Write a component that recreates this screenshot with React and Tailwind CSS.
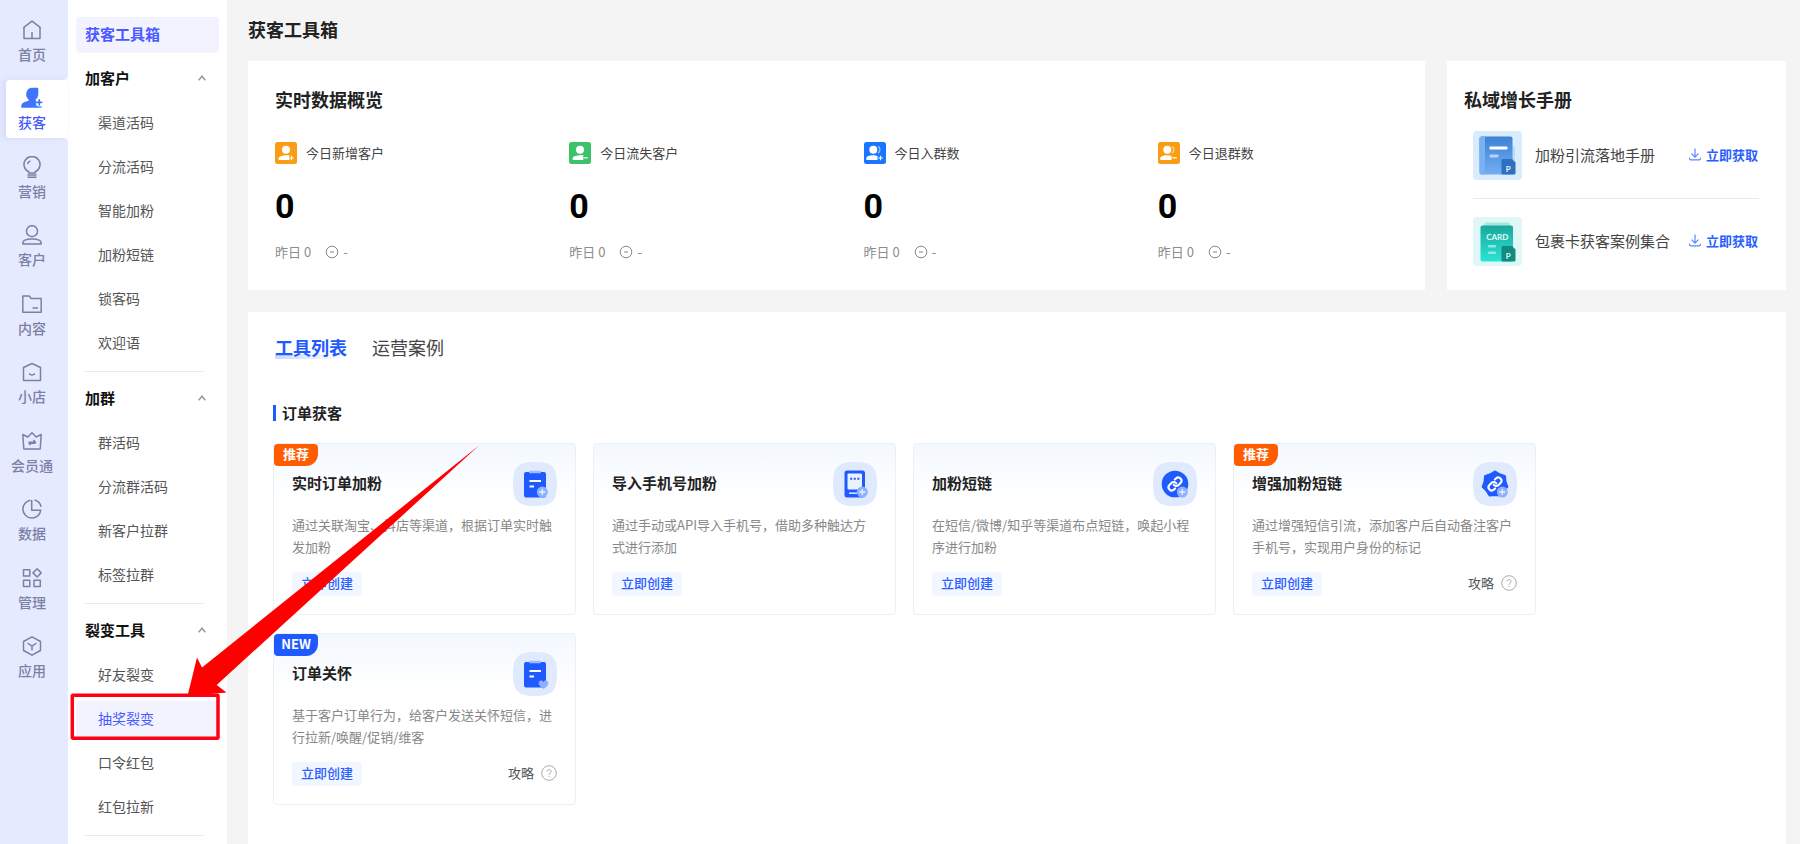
import { useState } from 'react';

const railItems = [
  { label: '首页', icon: HomeIcon },
  { label: '获客', icon: AcquireIcon },
  { label: '营销', icon: BulbIcon },
  { label: '客户', icon: UserIcon },
  { label: '内容', icon: FolderIcon },
  { label: '小店', icon: ShopIcon },
  { label: '会员通', icon: CrownIcon },
  { label: '数据', icon: ChartIcon },
  { label: '管理', icon: GridIcon },
  { label: '应用', icon: AppIcon },
];

const menuGroups = [
  { title: '加客户', items: ['渠道活码', '分流活码', '智能加粉', '加粉短链', '锁客码', '欢迎语'] },
  { title: '加群', items: ['群活码', '分流群活码', '新客户拉群', '标签拉群'] },
  { title: '裂变工具', items: ['好友裂变', '抽奖裂变', '口令红包', '红包拉新'] },
];

const stats = [
  { label: '今日新增客户', value: 0, yesterday: 0, color: '#fa9d14', plus: true },
  { label: '今日流失客户', value: 0, yesterday: 0, color: '#3dc26c', plus: false },
  { label: '今日入群数', value: 0, yesterday: 0, color: '#1b76ff', plus: true, group: true },
  { label: '今日退群数', value: 0, yesterday: 0, color: '#fa9d14', plus: false, group: true },
];

const manuals = [
  { name: '加粉引流落地手册', icon: BookCover },
  { name: '包裹卡获客案例集合', icon: CardCover },
];

const tools = [
  { title: '实时订单加粉', desc: '通过关联淘宝、抖店等渠道，根据订单实时触发加粉', badge: '推荐', icon: OrderIcon },
  { title: '导入手机号加粉', desc: '通过手动或API导入手机号，借助多种触达方式进行添加', icon: PhoneIcon },
  { title: '加粉短链', desc: '在短信/微博/知乎等渠道布点短链，唤起小程序进行加粉', icon: LinkIcon },
  { title: '增强加粉短链', desc: '通过增强短信引流，添加客户后自动备注客户手机号，实现用户身份的标记', badge: '推荐', guide: true, icon: StarLinkIcon },
  { title: '订单关怀', desc: '基于客户订单行为，给客户发送关怀短信，进行拉新/唤醒/促销/维客', badge: 'NEW', guide: true, icon: CareIcon },
];

const badgeColors = {
  '推荐': 'bg-[#ff5c00]',
  'NEW': 'bg-[#1f5aff]',
};

function RailSvg({ children }) {
  return (
    <svg width="20" height="20" viewBox="0 0 20 20" fill="none" stroke="currentColor" strokeWidth="1.5" strokeLinejoin="round" aria-hidden="true">
      {children}
    </svg>
  );
}

function HomeIcon() {
  return (
    <RailSvg>
      <path d="M1.2 7.8 10 1.2l8.8 6.6M2 7.2v11.3h16V7.2M10 12v6.5" />
    </RailSvg>
  );
}

function AcquireIcon() {
  return (
    <svg width="22" height="22" viewBox="0 0 22 22" aria-hidden="true">
      <path d="M10.500.8h5.800c.6 0 1 .4 1 1v5.600a6.400 6.400 0 0 1-3 5.300l1 1.200-.2 3.800 2.800 3.100H1.200c-.7 0-1-.4-1-1 0-3.600 2.600-5 7.200-5.800l.2-1.600A6.600 6.600 0 0 1 10.500.8Z" fill="#3f74ff" />
      <path d="M18.200 12.200v6.200M15.100 15.300h6.200" stroke="#fff" strokeWidth="4" />
      <path d="M18.200 12.200v6.200M15.100 15.300h6.200" stroke="#3f74ff" strokeWidth="1.700" />
      <path d="M13 20h7.500" stroke="#3f9cff" strokeWidth="1.600" />
    </svg>
  );
}

function BulbIcon() {
  return (
    <svg width="20" height="22" viewBox="0 0 20 22" fill="none" stroke="currentColor" strokeWidth="1.500" aria-hidden="true">
      <path d="M6.800 16.900v-1.100a8 8 0 1 1 6.400 0v1.100ZM5.500 19h9M5.500 21.200h9M5.600 8c.3-1.600 1.300-2.700 2.900-3.100" />
    </svg>
  );
}

function UserIcon() {
  return (
    <RailSvg>
      <circle cx="10" cy="6.200" r="5.500" />
      <path d="M.8 18.900c-.4-3.600 2.800-5 9.200-5s9.600 1.400 9.200 5Z" />
    </RailSvg>
  );
}

function FolderIcon() {
  return (
    <RailSvg>
      <path d="M.8 2h6.400l2 2.500h10v13.700H.8ZM10.500 14h5.500" />
    </RailSvg>
  );
}

function ShopIcon() {
  return (
    <RailSvg>
      <path d="M1.500 5.500 10 1.500l8.500 4v13h-17ZM7 11.500c1.500 2 4.500 2 6 0" />
    </RailSvg>
  );
}

function CrownIcon() {
  return (
    <RailSvg>
      <path d="M.8 3.500 5.800 6 10 1.800 14.200 6l5-2.500-1 14.500H1.800ZM6.500 11.300h7l-2-2.300M13.500 12.200h-7M6.800 12.200l1.800 1.800" />
    </RailSvg>
  );
}

function ChartIcon() {
  return (
    <RailSvg>
      <path d="M8.500 1.200A9 9 0 1 0 18.800 11.200H9.700V1M12.500 1c3.400.8 5.800 3.300 6.600 6.800" />
    </RailSvg>
  );
}

function GridIcon() {
  return (
    <RailSvg>
      <path d="M1.500 1.800h6.300v6.300H1.500ZM1.500 12.200h6.300v6.300H1.500ZM12 12.200h6.300v6.300H12ZM15.100.8l4.100 4.100-4.100 4.100L11 4.900Z" />
    </RailSvg>
  );
}

function AppIcon() {
  return (
    <RailSvg>
      <path d="M10 .8 18.500 5.500v9L10 19.200 1.500 14.500v-9ZM5.500 7l4.500 3.200L14.500 7M10 10.200v4.300" />
    </RailSvg>
  );
}

function StatIcon({ color, plus, group }) {
  return (
    <svg width="22" height="22" viewBox="0 0 22 22" aria-hidden="true">
      <rect width="22" height="22" rx="2.500" fill={color} />
      <circle cx={group ? 9.300 : 11} cy="7.700" r="4" fill="#fff" />
      {group && <path d="M14 4.300c2.600 1.400 2.600 5.400 0 6.800" stroke="#fff" strokeOpacity=".6" strokeWidth="1.200" fill="none" />}
      <path d={group ? 'M2.300 18v-1.700c0-1.900 3-3.100 6.600-3.100 2 0 3.600.3 4.600 1V18Z' : 'M3.700 18v-1.700c0-1.900 2.700-2.700 6.300-3.100h4.500V18Z'} fill="#fff" />
      <path d={plus ? 'M14.200 16h4.600M16.500 13.800v4.500' : 'M14 15.800h4.800'} stroke={color} strokeWidth="3" />
      <path d={plus ? 'M14.200 16h4.600M16.500 13.800v4.500' : 'M14.200 15.800h4.600'} stroke="#fff" strokeWidth="1.200" />
    </svg>
  );
}

function BookCover() {
  return (
    <svg width="49" height="49" viewBox="0 0 49 49" className="shrink-0" aria-hidden="true">
      <defs>
        <linearGradient id="book" x1="0" y1="0" x2="0" y2="1">
          <stop stopColor="#3b82d6" />
          <stop offset="1" stopColor="#73adf4" />
        </linearGradient>
      </defs>
      <rect width="49" height="49" rx="4" fill="#daebfb" />
      <rect x="34" y="15" width="8" height="28" rx="1.500" fill="#bcdcfb" />
      <rect x="6.500" y="5.500" width="33" height="38" rx="2" fill="url(#book)" />
      <path d="M8.500 5.500H12v38H8.500a2 2 0 0 1-2-2v-34a2 2 0 0 1 2-2Z" fill="#79b1f4" />
      <rect x="16.500" y="15.500" width="18" height="3" rx="1" fill="#fff" />
      <rect x="16.500" y="23.500" width="9" height="3" rx="1" fill="#b4d4f8" />
      <path d="M30 28h9l3.500 3.500V42a1.500 1.500 0 0 1-1.500 1.500H30A1.500 1.500 0 0 1 28.500 42V29.500A1.500 1.500 0 0 1 30 28Z" fill="#2c70bf" />
      <text x="35.300" y="40.500" fontSize="8" fontWeight="700" textAnchor="middle" fill="#e4f1ff" fontFamily="Lato, sans-serif">P</text>
    </svg>
  );
}

function CardCover() {
  return (
    <svg width="49" height="49" viewBox="0 0 49 49" className="shrink-0" aria-hidden="true">
      <defs>
        <linearGradient id="card" x1="0" y1="0" x2="0" y2="1">
          <stop stopColor="#1ba79c" />
          <stop offset="1" stopColor="#28e5d4" />
        </linearGradient>
      </defs>
      <rect width="49" height="49" rx="4" fill="#dff8f7" />
      <path d="M13 5.500h22a2 2 0 0 1 2 2V12H11V7.500a2 2 0 0 1 2-2Z" fill="#a6e6e0" />
      <rect x="7.500" y="8.500" width="32.500" height="36" rx="2" fill="url(#card)" />
      <text x="24.300" y="23" fontSize="8" fontWeight="700" textAnchor="middle" fill="#e0fffc" fontFamily="Lato, sans-serif">CARD</text>
      <rect x="15" y="28" width="8" height="2.500" rx="1" fill="#8eeae2" />
      <rect x="15" y="34.500" width="8" height="2.500" rx="1" fill="#8eeae2" />
      <path d="M30 29h9l3.500 3.500V43a1.500 1.500 0 0 1-1.500 1.500H30a1.500 1.500 0 0 1-1.500-1.500V30.500A1.500 1.500 0 0 1 30 29Z" fill="#138a80" />
      <text x="35.300" y="41.500" fontSize="8" fontWeight="700" textAnchor="middle" fill="#d5fffa" fontFamily="Lato, sans-serif">P</text>
    </svg>
  );
}

function ToolTile({ children, mark = 'plus' }) {
  return (
    <svg width="44" height="44" viewBox="0 0 44 44" className="shrink-0" aria-hidden="true">
      <path d="M22 0c17 0 22 5 22 22s-5 22-22 22S0 39 0 22 5 0 22 0Z" fill="#dfeaff" />
      {children}
      {mark === 'plus' && (
        <>
          <circle cx="29.300" cy="30" r="5.500" fill="#8db0ff" />
          <path d="M26.300 30h6M29.300 27v6" stroke="#e9f0ff" strokeWidth="1.300" />
        </>
      )}
      {mark === 'heart' && (
        <path d="M30.500 37c-3-2-4.900-3.800-4.900-5.900 0-2.700 3.300-3.600 4.900-1.200 1.600-2.400 4.900-1.500 4.900 1.200 0 2.100-1.900 3.900-4.900 5.900Z" fill="#8db0ff" />
      )}
    </svg>
  );
}

function Sheet() {
  return (
    <>
      <rect x="11" y="10" width="22" height="25.500" rx="2" fill="#1f5aff" />
      <rect x="16" y="8.800" width="12" height="2.500" rx="1" fill="#9dbbff" />
      <path d="M16.500 19H28M16.500 24.500h4.500" stroke="#fff" strokeWidth="2" />
    </>
  );
}

function OrderIcon() {
  return <ToolTile><Sheet /></ToolTile>;
}

function CareIcon() {
  return <ToolTile mark="heart"><Sheet /></ToolTile>;
}

function PhoneIcon() {
  return (
    <ToolTile>
      <rect x="11.500" y="8.500" width="20.500" height="27" rx="2.500" fill="#1f5aff" />
      <rect x="14.500" y="11.500" width="14.500" height="16" rx="1" fill="#eaf1ff" />
      <path d="M17.200 16.800h2M20.800 16.800h2M24.400 16.800h2" stroke="#1f5aff" strokeWidth="2" />
      <path d="M16 31.200h8" stroke="#dfeaff" strokeWidth="1.500" />
    </ToolTile>
  );
}

function Chain() {
  return (
    <g transform="translate(14.200 14.200) scale(.65)" stroke="#fff" strokeWidth="3.200" fill="none" strokeLinecap="round">
      <path d="M10 13a5 5 0 0 0 7.540.540l3-3a5 5 0 0 0-7.070-7.070l-1.720 1.710" />
      <path d="M14 11a5 5 0 0 0-7.540-.540l-3 3a5 5 0 0 0 7.070 7.070l1.710-1.710" />
    </g>
  );
}

function LinkIcon() {
  return (
    <ToolTile>
      <circle cx="22" cy="22" r="13.300" fill="#1f5aff" />
      <Chain />
    </ToolTile>
  );
}

function StarLinkIcon() {
  return (
    <ToolTile>
      <path d="m22 9 4.800 2.900 5.500 1.900.6 5.800 1.900 5.300-4.100 4.100-3 4.900-5.700-.6-5.700.6-3-4.900-4.100-4.100 1.900-5.300.6-5.800 5.500-1.900Z" fill="#1f5aff" stroke="#1f5aff" strokeWidth="1.200" strokeLinejoin="round" />
      <Chain />
    </ToolTile>
  );
}

function ChevronUp() {
  return (
    <svg width="8" height="6" viewBox="0 0 8 6" fill="none" stroke="#999" strokeWidth="1.500" aria-hidden="true">
      <path d="m.7 5.200 3.300-4 3.300 4" />
    </svg>
  );
}

function NavRail() {
  return (
    <nav className="w-[68px] shrink-0 bg-[#e6eaff] pt-3">
      <ul className="flex h-[674px] flex-col justify-between">
        {railItems.map(({ label, icon: Icon }) => {
          const active = label === '获客';
          return (
            <li key={label} className="relative pl-1.5">
              <a
                href="#"
                className={`flex h-[58px] flex-col items-center justify-between pt-[7px] pr-2.5 pb-1.5 text-sm leading-5 ${active ? 'rounded-l bg-white text-[#4559ff] shadow-[-3px_0_6px_rgba(80,90,200,0.12)]' : 'text-[#7d7fa6]'}`}
              >
                <span className="flex h-[22px] items-center"><Icon /></span>
                <span className="font-medium">{label}</span>
              </a>
              {active && (
                <>
                  <span className="absolute right-0 -top-1 size-1 bg-white"><span className="block size-1 rounded-br bg-[#e6eaff]" /></span>
                  <span className="absolute right-0 -bottom-1 size-1 bg-white"><span className="block size-1 rounded-tr bg-[#e6eaff]" /></span>
                </>
              )}
            </li>
          );
        })}
      </ul>
    </nav>
  );
}

function SideMenu() {
  return (
    <aside className="w-[159px] shrink-0 bg-white pt-[13px]">
      <div className="flex h-11 items-center px-2">
        <a href="#" className="flex h-9 flex-1 items-center rounded-sm bg-[#f2f3ff] pb-0.5 pl-[9px] text-[15px] font-bold text-[#4a5aff]">获客工具箱</a>
      </div>
      {menuGroups.map((group) => (
        <section key={group.title}>
          <button type="button" className="flex h-11 w-full items-center justify-between pr-[21px] pb-0.5 pl-[17px] text-[15px] font-bold text-[#111]">
            {group.title}
            <ChevronUp />
          </button>
          <ul>
            {group.items.map((item) => (
              <li key={item} className="flex h-11 items-center px-2">
                <a
                  href="#"
                  className={`flex h-9 flex-1 items-center rounded-sm pb-0.5 pl-[22px] text-sm ${item === '抽奖裂变' ? 'bg-[#f2f3ff] text-[#4a5aff]' : 'text-[#555]'}`}
                >
                  {item}
                </a>
              </li>
            ))}
          </ul>
          <div className="flex h-3 items-center pr-[23px] pl-[17px]"><hr className="flex-1 border-[#eaeaea]" /></div>
        </section>
      ))}
    </aside>
  );
}

function StatsPanel() {
  return (
    <section className="min-w-0 flex-1 bg-white py-[26px]">
      <h2 className="pl-[27px] text-lg leading-6 font-bold text-[#222]">实时数据概览</h2>
      <div className="mt-[31px] grid grid-cols-4">
        {stats.map((s) => (
          <div key={s.label} className="pl-[27px]">
            <div className="flex h-[22px] items-center gap-[9px] text-[13px] text-[#444]">
              <StatIcon {...s} />
              {s.label}
            </div>
            <p className="mt-[22px] font-[Roboto,sans-serif] text-[34px] leading-10 font-bold text-black">{s.value}</p>
            <p className="mt-4 mb-0.5 flex items-center text-[13px] leading-5 text-[#8c8c8c]">
              昨日 {s.yesterday}
              <svg width="14" height="14" viewBox="0 0 14 14" fill="none" stroke="#888" className="mr-1 ml-3.5" aria-hidden="true">
                <circle cx="7" cy="7" r="5.800" />
                <path d="M5 7h4" />
              </svg>
              -
            </p>
          </div>
        ))}
      </div>
    </section>
  );
}

function ManualPanel() {
  return (
    <section className="w-[339px] shrink-0 bg-white pt-[26px] pr-[27px] pl-[17px]">
      <h2 className="text-lg leading-6 font-bold text-[#222]">私域增长手册</h2>
      <ul className="mt-5 divide-y divide-[#eaeaea] pl-[9px]">
        {manuals.map(({ name, icon: Icon }) => (
          <li key={name} className="flex items-center pb-[18px] not-first:pt-[18px]">
            <Icon />
            <span className="ml-[13px] flex-1 text-[15px] whitespace-nowrap text-[#444]">{name}</span>
            <a href="#" className="flex items-center gap-[5px] pr-px pb-0.5 text-[13px] font-bold text-[#2a5eff]">
              <svg width="12" height="13" viewBox="0 0 12 13" fill="none" stroke="#5c86ff" strokeWidth="1.200" aria-hidden="true">
                <path d="M6 .5v8.500M2.500 5.700 6 9.200l3.500-3.500M.6 9.800v.9c0 .7.500 1.200 1.200 1.200h8.400c.7 0 1.200-.5 1.200-1.200v-.9" />
              </svg>
              立即获取
            </a>
          </li>
        ))}
      </ul>
    </section>
  );
}

function ToolCard({ title, desc, badge, guide, icon: Icon }) {
  return (
    <article className="relative rounded border border-[#eeeff2] bg-[linear-gradient(#f3f8ff,#fff_56px)] px-[18px] py-[18px]">
      {badge && (
        <span className={`absolute top-0 left-0 flex h-[22px] w-11 items-center justify-center rounded-tl-sm rounded-tr-sm rounded-br-xl rounded-bl-sm pb-0.5 text-[13px] font-bold text-white ${badgeColors[badge]}`}>
          {badge}
        </span>
      )}
      <div className="flex items-center justify-between">
        <h4 className="pb-0.5 text-[15px] leading-6 font-bold text-[#222]">{title}</h4>
        <Icon />
      </div>
      <p className="mt-2 h-11 text-[13px] leading-[22px] text-[#888]">{desc}</p>
      <div className="mt-3.5 flex items-center justify-between">
        <button type="button" className="h-6 rounded-sm bg-[#f1f6ff] px-[9px] pb-0.5 text-[13px] leading-[22px] font-medium text-[#2a5eff]">立即创建</button>
        {guide && (
          <a href="#" className="flex items-center gap-[7px] pb-0.5 text-[13px] leading-5 text-[#555]">
            攻略
            <svg width="16" height="16" viewBox="0 0 16 16" fill="none" stroke="#aaa" aria-hidden="true">
              <circle cx="8" cy="8" r="7.300" />
              <path d="M6 6.500c0-2.600 4.100-2.500 4.100-.1C10.100 8 8 7.900 8 9.700M8 10.800v1.200" />
            </svg>
          </a>
        )}
      </div>
    </article>
  );
}

function ToolsPanel() {
  const [tab, setTab] = useState('工具列表');

  return (
    <section className="flex-1 bg-white px-[25px] pt-[23px] pb-8">
      <div className="flex gap-[25px] pl-0.5 text-lg leading-6">
        {['工具列表', '运营案例'].map((name) => (
          <button
            key={name}
            type="button"
            onClick={() => setTab(name)}
            className={tab === name ? 'bg-[linear-gradient(to_right,#c9d9ff,#fff)] bg-[length:100%_5px] bg-bottom bg-no-repeat font-bold text-[#1f5aff]' : 'text-[#444]'}
          >
            {name}
          </button>
        ))}
      </div>
      <h3 className="mt-11 flex items-center gap-1.5 text-[15px] leading-5 font-bold text-[#222]">
        <span className="h-4 w-[3px] bg-[#1f5aff]" />
        订单获客
      </h3>
      <div className="mt-5 grid grid-cols-[repeat(auto-fill,303px)] gap-x-[17px] gap-y-[18px]">
        {tools.map((tool) => (
          <ToolCard key={tool.title} {...tool} />
        ))}
      </div>
    </section>
  );
}

// red box and arrow that lie over the page
function Callout() {
  return (
    <svg width="500" height="760" viewBox="0 0 500 760" className="pointer-events-none absolute top-0 left-0 z-10" aria-hidden="true">
      <rect x="72.300" y="695.300" width="145.700" height="43" rx="1" fill="none" stroke="#ff0014" strokeWidth="3.500" />
      <path d="M479 445.500 202 667.500 197 657.500 187.500 696 226.500 692.500 216.700 685Z" fill="#f00" />
    </svg>
  );
}

export default function App() {
  return (
    <div className="relative flex min-h-screen bg-[#f4f4f4] font-['Noto_Sans_CJK_SC',sans-serif]">
      <NavRail />
      <SideMenu />
      <main className="flex min-w-0 flex-1 flex-col pr-3.5 pl-[21px]">
        <h1 className="h-[61px] text-lg leading-[59px] font-bold text-[#222]">获客工具箱</h1>
        <div className="mb-[22px] flex gap-[22px]">
          <StatsPanel />
          <ManualPanel />
        </div>
        <ToolsPanel />
      </main>
      <Callout />
    </div>
  );
}
